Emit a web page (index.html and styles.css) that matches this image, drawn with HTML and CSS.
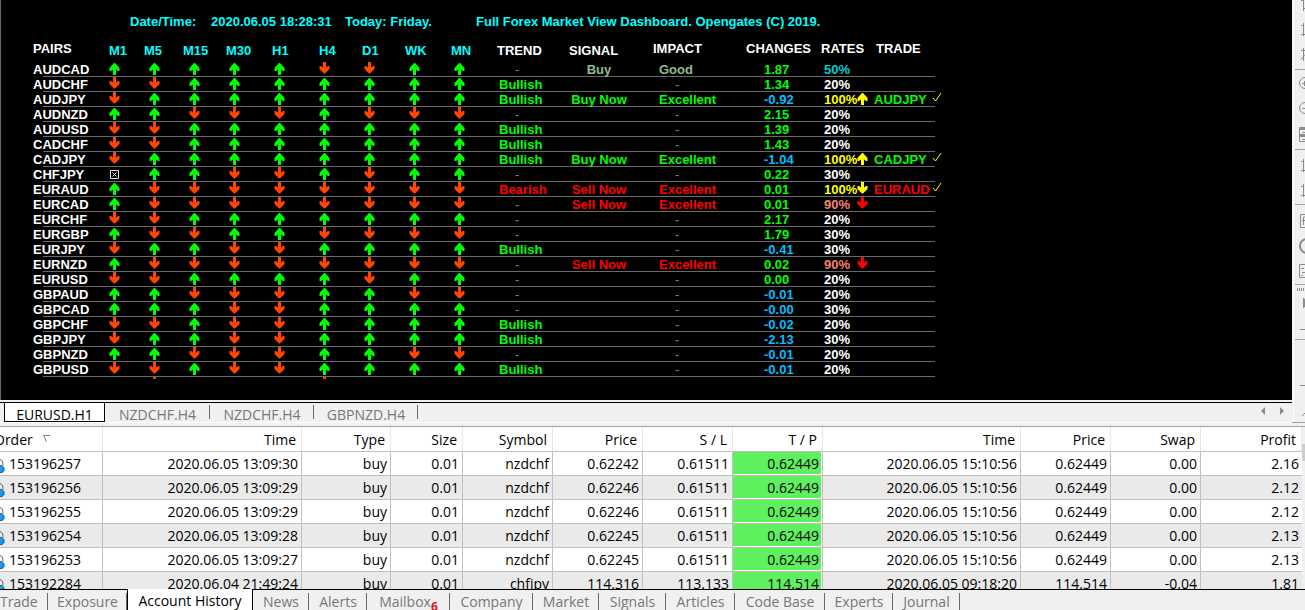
FILE: index.html
```
<!DOCTYPE html>
<html lang="en">
<head>
    <meta charset="UTF-8">
    <meta name="viewport" content="width=device-width, initial-scale=1.0">
    <title>Full Forex Market View Dashboard</title>
    <link rel="stylesheet" href="styles.css">
</head>
<body>

<svg class="symbols" aria-hidden="true">
    <symbol id="up" viewBox="0 0 11 15"><path d="M5 1h1l4.500 5v3H9L7 7.500V13H4V7.500L2 9H.5V6z"/></symbol>
    <symbol id="down" viewBox="0 0 11 15"><path d="M4 0h3v5.500L9 4h1.500v3L6 11.500H5L.5 7V4H2l2 1.500z"/></symbol>
    <symbol id="box" viewBox="0 0 11 15"><path fill="none" stroke="#d8e0ee" d="M1.500 3.500h8v8h-8zM3.500 5.500l4 4M7.500 5.500l-4 4"/></symbol>
    <symbol id="check" viewBox="0 0 11 15"><path fill="none" stroke="#ffff00" d="M1 6l2.500 3L9 1"/></symbol>
    <symbol id="lock" viewBox="0 0 6 16"><path fill="none" stroke="#555" d="M-1 1.500c3 0 4 2 4 6"/><path fill="#1a9bea" stroke="#1c5f93" d="M-1 7.500h3q3 2 2 5t-5 2z"/></symbol>
</svg>

<main class="workspace">
    <section class="chart">
        <p class="info">
            <span>Date/Time:</span>
            <span>2020.06.05 18:28:31</span>
            <span>Today: Friday.</span>
            <span>Full Forex Market View Dashboard. Opengates (C) 2019.</span>
        </p>
        <table class="pairs">
            <thead>
                <tr>
                    <th>PAIRS</th>
                    <th class="frame">M1</th>
                    <th class="frame">M5</th>
                    <th class="frame">M15</th>
                    <th class="frame">M30</th>
                    <th class="frame">H1</th>
                    <th class="frame">H4</th>
                    <th class="frame">D1</th>
                    <th class="frame">WK</th>
                    <th class="frame">MN</th>
                    <th class="low">TREND</th>
                    <th class="low">SIGNAL</th>
                    <th>IMPACT</th>
                    <th>CHANGES</th>
                    <th>RATES</th>
                    <th>TRADE</th>
                </tr>
            </thead>
            <tbody id="pairRows"></tbody>
        </table>
    </section>

    <nav class="chart-tabs">
        <button type="button" class="active">EURUSD.H1</button>
        <button type="button">NZDCHF.H4</button>
        <button type="button">NZDCHF.H4</button>
        <button type="button">GBPNZD.H4</button>
        <span class="scroll">
            <button type="button" aria-label="Scroll left"><svg width="4" height="8"><path d="M4 0v8L0 4z"/></svg></button>
            <button type="button" aria-label="Scroll right"><svg width="4" height="8"><path d="M0 0v8l4-4z"/></svg></button>
        </span>
    </nav>

    <aside class="toolbar">
        <button type="button" aria-label="Bar chart"><svg viewBox="0 0 11 25"><path d="M9.500 6v13M7 8.500h2M10 16.500h1"/></svg></button>
        <button type="button" aria-label="Candlesticks"><svg viewBox="0 0 11 25"><path d="M9.500 6v13M7 8.500h2M7 17.500h4"/></svg></button>
        <button type="button" aria-label="Line chart"><svg viewBox="0 0 11 25"><path d="M9.500 6v13M7 8.500h4M7 17.500l4-5"/></svg></button>
        <hr>
        <button type="button" aria-label="Zoom in"><svg viewBox="0 0 11 25"><circle cx="11" cy="11" r="5.500"/><path d="M8 11.500h3M10.500 9v5"/></svg></button>
        <button type="button" aria-label="Zoom out"><svg viewBox="0 0 11 25"><circle cx="11" cy="11" r="5.500"/><path d="M8 11.500h3"/></svg></button>
        <button type="button" aria-label="Tile windows"><svg viewBox="0 0 11 25"><path d="M11 5.500H5.500v14H11M6 6.500h5M6 7.500h5M6 12.500h5M6 13.500h5M6 14.500h5M8 10.500h3M8 17.500h3"/></svg></button>
        <hr>
        <button type="button" aria-label="Auto scroll"><svg viewBox="0 0 11 25"><path d="M9.500 7v13M7 9.500h2M7 18.500h4"/></svg></button>
        <button type="button" aria-label="Chart shift"><svg viewBox="0 0 11 25"><path d="M9.500 7v13M7 9.500h2M7 18.500h4"/></svg></button>
        <hr>
        <button type="button" aria-label="Indicators"><svg viewBox="0 0 11 25"><path d="M11 7.500H6.500v13H11M9.500 18v-8h2M8 13.500h3"/></svg></button>
        <button type="button" aria-label="Periods"><svg viewBox="0 0 11 25"><circle cx="13" cy="14" r="7" stroke-width="2"/></svg></button>
        <button type="button" aria-label="Templates"><svg viewBox="0 0 11 25"><path d="M11 7.500H5.500v13H11M7 11.500h3M8 15.500h3M7 18.500h2"/></svg></button>
        <hr>
        <button type="button" aria-label="Auto trading"><svg viewBox="0 0 11 25"><path d="M3.500 1v3M5.500 1v3M7.500 1v3M9.500 1v3"/><path fill="#8c8c8c" d="M9.500 11v10l3-5z"/></svg></button>
        <button type="button" aria-label="Crosshair"><svg viewBox="0 0 11 25"><path d="M6 17.500h5"/></svg></button>
        <hr>
        <button type="button" aria-label="Cursor"><svg viewBox="0 0 11 25"></svg></button>
        <button type="button" aria-label="Horizontal line"><svg viewBox="0 0 11 25"><path d="M6 18.500h5"/></svg></button>
        <button type="button" aria-label="Trend line"><svg viewBox="0 0 11 25"><path d="M8 24l4-4"/></svg></button>
    </aside>
</main>

<section class="terminal">
    <table class="history">
        <colgroup>
            <col class="order">
            <col class="open-time">
            <col class="side">
            <col class="size">
            <col class="price" span="4">
            <col class="close-time">
            <col class="price" span="2">
            <col class="profit">
        </colgroup>
        <thead>
            <tr>
                <th>Order <svg class="sort" width="8" height="8"><path d="M0 .5h7M1 1l2.500 6"/></svg></th>
                <th>Time</th>
                <th>Type</th>
                <th>Size</th>
                <th>Symbol</th>
                <th>Price</th>
                <th>S / L</th>
                <th>T / P</th>
                <th>Time</th>
                <th>Price</th>
                <th>Swap</th>
                <th>Profit</th>
            </tr>
        </thead>
        <tbody id="historyRows"></tbody>
    </table>
    <div class="scrollbar"><div class="thumb"></div></div>
</section>

<nav class="terminal-tabs">
    <button type="button">Trade</button>
    <button type="button">Exposure</button>
    <button type="button" class="active">Account History</button>
    <button type="button">News</button>
    <button type="button">Alerts</button>
    <button type="button">Mailbox<sub>6</sub></button>
    <button type="button">Company</button>
    <button type="button">Market</button>
    <button type="button">Signals</button>
    <button type="button">Articles</button>
    <button type="button">Code Base</button>
    <button type="button">Experts</button>
    <button type="button">Journal</button>
</nav>

<script>
    // pair, arrows M1..MN (u = up, d = down, x = none), trend, signal, impact, change, rate
    const pairs = [
        ['AUDCAD', 'uuuuudduu', '-', 'Buy', 'Good', '1.87', '50%'],
        ['AUDCHF', 'dduuuuuuu', 'Bullish', '', '-', '1.34', '20%'],
        ['AUDJPY', 'duuuuuuuu', 'Bullish', 'Buy Now', 'Excellent', '-0.92', '100%'],
        ['AUDNZD', 'uuddduddd', '-', '', '-', '2.15', '20%'],
        ['AUDUSD', 'dduuuuuuu', 'Bullish', '', '-', '1.39', '20%'],
        ['CADCHF', 'dduuuuuuu', 'Bullish', '', '-', '1.43', '20%'],
        ['CADJPY', 'duuuuuuuu', 'Bullish', 'Buy Now', 'Excellent', '-1.04', '100%'],
        ['CHFJPY', 'xuudduduu', '-', '', '-', '0.22', '30%'],
        ['EURAUD', 'udddddddd', 'Bearish', 'Sell Now', 'Excellent', '0.01', '100%'],
        ['EURCAD', 'udddddddd', '-', 'Sell Now', 'Excellent', '0.01', '90%'],
        ['EURCHF', 'dduuuuuuu', '-', '', '-', '2.17', '20%'],
        ['EURGBP', 'udduudddd', '-', '', '-', '1.79', '30%'],
        ['EURJPY', 'duudduuuu', 'Bullish', '', '-', '-0.41', '30%'],
        ['EURNZD', 'udddddddd', '-', 'Sell Now', 'Excellent', '0.02', '90%'],
        ['EURUSD', 'dduuuuduu', '-', '', '-', '0.00', '20%'],
        ['GBPAUD', 'uuddduudd', '-', '', '-', '-0.01', '20%'],
        ['GBPCAD', 'uuudduuuu', '-', '', '-', '-0.00', '30%'],
        ['GBPCHF', 'ddudduuuu', 'Bullish', '', '-', '-0.02', '20%'],
        ['GBPJPY', 'duudduuuu', 'Bullish', '', '-', '-2.13', '30%'],
        ['GBPNZD', 'uuddduudd', '-', '', '-', '-0.01', '20%'],
        ['GBPUSD', 'ddudduuuu', 'Bullish', '', '-', '-0.01', '20%']
    ];

    const icons = { u: 'up', d: 'down', x: 'box' };
    const words = { 'Bullish': 'good', 'Buy Now': 'good', 'Bearish': 'bad', 'Sell Now': 'bad', 'Buy': 'soft', 'Good': 'soft', '-': 'none' };
    const rates = { '50%': 'half', '90%': 'high', '100%': 'full' };

    function icon(name, cls) {
        return `<svg class="icon ${cls || name}" aria-hidden="true"><use href="#${name}"/></svg>`;
    }

    document.getElementById('pairRows').innerHTML = pairs.map(([pair, arrows, trend, signal, impact, change, rate]) => {
        const sell = signal === 'Sell Now';
        const side = sell ? 'bad' : 'good';
        const strong = rate === '100%' || rate === '90%';
        return `<tr>
            <td>${pair}</td>
            ${[...arrows].map(a => `<td>${icon(icons[a])}</td>`).join('')}
            <td class="${words[trend]}">${trend}</td>
            <td class="signal ${words[signal] || ''}">${signal}</td>
            <td class="${impact === 'Excellent' ? side : words[impact]}">${impact}</td>
            <td class="${change[0] === '-' ? 'minus' : 'good'}">${change}</td>
            <td class="${rates[rate] || ''}">${rate}</td>
            <td>${strong ? icon(sell ? 'down' : 'up', rates[rate]) : ''}</td>
            <td class="${side}">${rate === '100%' ? pair : ''}</td>
            <td>${rate === '100%' ? icon('check') : ''}</td>
        </tr>`;
    }).join('') + `<tr class="cut"><td></td>${[...' d   d   '].map(a => `<td>${a === 'd' ? icon('down') : ''}</td>`).join('')}</tr>`;

    const orders = [
        ['153196257', '2020.06.05 13:09:30', 'buy', '0.01', 'nzdchf', '0.62242', '0.61511', '0.62449', '2020.06.05 15:10:56', '0.62449', '0.00', '2.16'],
        ['153196256', '2020.06.05 13:09:29', 'buy', '0.01', 'nzdchf', '0.62246', '0.61511', '0.62449', '2020.06.05 15:10:56', '0.62449', '0.00', '2.12'],
        ['153196255', '2020.06.05 13:09:29', 'buy', '0.01', 'nzdchf', '0.62246', '0.61511', '0.62449', '2020.06.05 15:10:56', '0.62449', '0.00', '2.12'],
        ['153196254', '2020.06.05 13:09:28', 'buy', '0.01', 'nzdchf', '0.62245', '0.61511', '0.62449', '2020.06.05 15:10:56', '0.62449', '0.00', '2.13'],
        ['153196253', '2020.06.05 13:09:27', 'buy', '0.01', 'nzdchf', '0.62245', '0.61511', '0.62449', '2020.06.05 15:10:56', '0.62449', '0.00', '2.13'],
        ['153192284', '2020.06.04 21:49:24', 'buy', '0.01', 'chfjpy', '114.316', '113.133', '114.514', '2020.06.05 09:18:20', '114.514', '-0.04', '1.81']
    ];

    document.getElementById('historyRows').innerHTML = orders.map(order =>
        '<tr>' + order.map((value, i) => {
            if (i === 0) return `<td><svg class="lock" aria-hidden="true"><use href="#lock"/></svg>${value}</td>`;
            return `<td${i === 7 ? ' class="hit"' : ''}>${value}</td>`;
        }).join('') + '</tr>'
    ).join('');
</script>

</body>
</html>
```
FILE: styles.css
```
* {
    box-sizing: border-box;
}

body {
    margin: 0;
    height: 100vh;
    display: flex;
    flex-direction: column;
    overflow: hidden;
    background-color: #f0f0f0;
    font-family: "Open Sans", "Noto Sans", sans-serif;
    font-size: 14px;
    color: #000;
}

button {
    margin: 0;
    padding: 0;
    border: none;
    background: none;
    font: inherit;
    color: #777;
    cursor: pointer;
    white-space: nowrap;
}

.symbols {
    display: none;
}

.workspace {
    display: grid;
    grid-template-columns: minmax(0, 1fr) 13px;
    grid-template-rows: auto 21px;
    row-gap: 2px;
    flex: none;
}

/* market dashboard */
.chart {
    padding: 14px 0 21px 32px;
    background-color: #000;
    border-left: 1px solid #696969;
    color: #fff;
    font: bold 13px/15px "Liberation Sans", Arial, sans-serif;
}

.info {
    display: grid;
    grid-template-columns: 81px 134px 131px auto;
    margin: 0 0 12px;
    padding-left: 97px;
    color: #00ffff;
    white-space: nowrap;
}

.pairs,
.pairs thead,
.pairs tbody {
    display: block;
}

.pairs tr {
    display: grid;
    height: 15px;
}

.pairs thead tr {
    grid-template-columns: 76px 35px 39px 43px 46px 47px 43px 43px 46px 46px 72px 84px 93px 75px 55px 60px;
    height: 21px;
}

.pairs tbody tr {
    width: 902px;
    grid-template-columns: 76px 40px 40px 40px 45px 45px 45px 45px 45px 45px 71px 89px 105px 60px 33px 17px 58px 11px;
    background: linear-gradient(#696969, #696969) 10px 100% / 100% 1px no-repeat;
}

.pairs tbody .cut {
    height: 2px;
    overflow: hidden;
    background: none;
}

.pairs th,
.pairs td {
    padding: 0;
    text-align: left;
    white-space: nowrap;
}

.pairs .frame,
.pairs .low {
    padding-top: 2px;
}

.pairs .frame {
    color: #00ffff;
}

.icon {
    display: block;
    width: 11px;
    height: 15px;
}

.up {
    fill: #00ff00;
}

.down {
    fill: #ff4500;
}

.icon.full {
    fill: #ffff00;
}

.icon.high {
    fill: #ff0000;
}

.good {
    color: #00ff00;
}

.bad {
    color: #ff0000;
}

.soft {
    color: #8fbc8f;
}

.minus {
    color: #00bfff;
}

.half {
    color: #00ced1;
}

.high {
    color: #fa8072;
}

.full {
    color: #ffff00;
}

.pairs .none {
    padding-left: 16px;
    color: #808080;
    font-weight: normal;
}

.pairs .signal {
    width: 58px;
    text-align: center;
}

/* chart tabs */
.chart-tabs {
    grid-row: 2;
    display: grid;
    grid-template-columns: 101px 105px 104px 104px 1fr;
    padding-left: 4px;
    border-top: 1px solid #000;
    border-bottom: 1px solid #fff;
    color: #777;
}

.chart-tabs > button {
    height: 19px;
    line-height: 23px;
    overflow: hidden;
    background: linear-gradient(#696969, #696969) 100% 2px / 1px 14px no-repeat;
}

.chart-tabs > .active {
    border: 1px solid #000;
    border-top: none;
    background: #fff;
    color: #000;
}

.chart-tabs .scroll {
    display: flex;
    justify-content: flex-end;
    align-items: center;
    gap: 15px;
    padding: 0 8px 4px 0;
}

.scroll svg {
    display: block;
    fill: #8c8c8c;
}

/* toolbar at the right edge */
.toolbar {
    grid-column: 2;
    grid-row: 1 / 3;
    height: 0;
    min-height: 100%;
    overflow: hidden;
    padding-left: 2px;
    border-bottom: 1px solid #a0a0a0;
    background: linear-gradient(#fff, #fff) 1px 0 / 1px 100% no-repeat;
}

.toolbar button {
    display: block;
    width: 11px;
    height: 25px;
}

.toolbar button:first-child {
    margin-top: -8px;
}

.toolbar svg {
    display: block;
    width: 11px;
    height: 25px;
    fill: none;
    stroke: #8c8c8c;
}

.toolbar hr {
    height: 1px;
    margin: 2px 0 2px 1px;
    border: none;
    background-color: #a0a0a0;
}

/* account history */
.terminal {
    flex: 1;
    min-height: 0;
    display: flex;
    margin-top: 3px;
    overflow: hidden;
    border-top: 1px solid #a0a0a0;
    background-color: #fff;
}

.history {
    flex: 1;
    width: 100%;
    table-layout: fixed;
    border-collapse: separate;
    border-spacing: 0;
    align-self: flex-start;
}

.order {
    width: 103px;
}

.open-time {
    width: 199px;
}

.side {
    width: 89px;
}

.size {
    width: 72px;
}

.price {
    width: 90px;
}

.close-time {
    width: 198px;
}

.profit {
    width: 101px;
}

.history th,
.history td {
    height: 24px;
    padding: 0 3px 0 0;
    border-right: 1px solid #c0c0c0;
    border-bottom: 1px solid #c0c0c0;
    line-height: 23px;
    text-align: right;
    white-space: nowrap;
}

.history th {
    height: 25px;
    padding-right: 5px;
    border-right-color: #e5e5e5;
    font-weight: normal;
}

.history th:first-child {
    text-align: left;
    text-indent: -6px;
}

.history td:first-child {
    text-align: left;
}

.history td:last-child {
    border-right: none;
}

.history tbody tr:nth-child(even) {
    background-color: #eaeaea;
}

.history .hit {
    background-color: #5ff05f;
    background-clip: padding-box;
    box-shadow: inset 0 -1px #fff, inset -1px 0 #fff;
}

.sort {
    margin-left: 7px;
    vertical-align: 2px;
    fill: none;
    stroke: #808080;
}

.lock {
    width: 6px;
    height: 16px;
    margin-right: 3px;
    vertical-align: -5px;
}

.scrollbar {
    flex: none;
    width: 3px;
    padding-top: 17px;
    background-color: #f0f0f0;
}

.thumb {
    height: 17px;
    background-color: #cdcdcd;
}

/* terminal tabs */
.terminal-tabs {
    flex: none;
    height: 21px;
    display: grid;
    grid-template-columns: 48px 79px 126px 56px 58px 83px 83px 66px 67px 69px 90px 68px 67px;
    border-top: 1px solid #000;
}

.terminal-tabs button {
    line-height: 24px;
    height: 20px;
    overflow: hidden;
    background: linear-gradient(#696969, #696969) 100% 3px / 1px 17px no-repeat;
}

.terminal-tabs button:first-child {
    padding-right: 12px;
    text-align: right;
}

.terminal-tabs .active {
    height: 21px;
    margin-top: -1px;
    border: solid #000;
    border-width: 0 1px;
    background: #fff;
    color: #000;
}

.terminal-tabs sub {
    color: #e81123;
    font-size: 12px;
    font-weight: bold;
    line-height: 1px;
}
```
